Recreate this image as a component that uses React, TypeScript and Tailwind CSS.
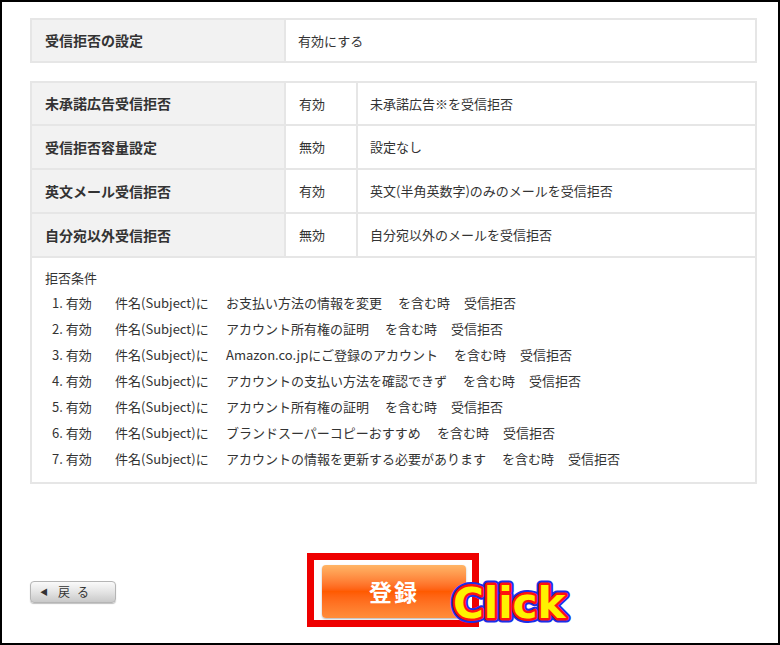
const jp = { fontFamily: '"Noto Sans CJK JP", "Liberation Sans", sans-serif' };

const settings = [
  { label: "未承諾広告受信拒否", state: "有効", note: "未承諾広告※を受信拒否" },
  { label: "受信拒否容量設定", state: "無効", note: "設定なし" },
  { label: "英文メール受信拒否", state: "有効", note: "英文(半角英数字)のみのメールを受信拒否" },
  { label: "自分宛以外受信拒否", state: "無効", note: "自分宛以外のメールを受信拒否" },
];

const rules = [
  "お支払い方法の情報を変更",
  "アカウント所有権の証明",
  "Amazon.co.jpにご登録のアカウント",
  "アカウントの支払い方法を確認できず",
  "アカウント所有権の証明",
  "ブランドスーパーコピーおすすめ",
  "アカウントの情報を更新する必要があります",
];

function ClickBadge() {
  const common = {
    x: 5,
    y: 37,
    fontSize: 42,
    fontWeight: 900,
    fontFamily: '"DejaVu Sans", "Liberation Sans", sans-serif',
  };
  return (
    <svg width="150" height="48" viewBox="0 0 150 48" className="block overflow-visible">
      <text {...common} fill="#1a2ee8" stroke="#1a2ee8" strokeWidth="9" strokeLinejoin="round">
        Click
      </text>
      <text {...common} fill="#ff1010" stroke="#ff1010" strokeWidth="5" strokeLinejoin="round">
        Click
      </text>
      <text {...common} fill="#fff200">
        Click
      </text>
    </svg>
  );
}

export default function App() {
  return (
    <div
      className="w-[780px] h-[645px] border-2 border-black bg-white text-[#333] overflow-hidden"
      style={jp}
    >
      <div className="px-[28px] pt-[16px]">
        <table className="w-[727px] border-collapse">
          <tbody>
            <tr className="h-[43px]">
              <td className="w-[254px] border-2 border-[#e6e6e6] bg-[#f2f2f2] pl-[13px] text-[14px] font-bold">
                受信拒否の設定
              </td>
              <td className="border-2 border-[#e6e6e6] pl-[12px] text-[13px]">有効にする</td>
            </tr>
          </tbody>
        </table>

        <table className="w-[727px] border-collapse mt-[18px]">
          <tbody>
            {settings.map((s, i) => (
              <tr key={s.label} className={i === 0 ? "h-[43px]" : "h-[44px]"}>
                <td className="w-[254px] border-2 border-[#e6e6e6] bg-[#f2f2f2] pl-[13px] text-[14px] font-bold">
                  {s.label}
                </td>
                <td className="w-[72px] border-2 border-[#e6e6e6] pl-[13px] text-[13px]">{s.state}</td>
                <td className="border-2 border-[#e6e6e6] pl-[12px] text-[13px]">{s.note}</td>
              </tr>
            ))}
            <tr>
              <td colSpan={3} className="border-2 border-[#e6e6e6] pl-[13px] pt-[9px] pb-[10px] text-[13px]">
                <div className="leading-[22px]">拒否条件</div>
                <ul className="mt-[1px] pl-[7px]">
                  {rules.map((r, i) => (
                    <li key={i} className="flex h-[26px] items-center whitespace-nowrap">
                      <span className="w-[63px]">{i + 1}. 有効</span>
                      <span className="w-[111px]">件名(Subject)に</span>
                      <span>{r}</span>
                      <span className="ml-[16px]">を含む時</span>
                      <span className="ml-[14px]">受信拒否</span>
                    </li>
                  ))}
                </ul>
              </td>
            </tr>
          </tbody>
        </table>

        <div className="flex items-center mt-[69px]">
          <button className="mt-[4px] flex h-[22px] w-[86px] items-center rounded-[4px] border border-[#b5b5b5] bg-gradient-to-b from-[#fafafa] via-[#e4e4e4] to-[#c9c9c9] pl-[9px] text-[12px] text-[#333] shadow-[0_1px_1px_rgba(0,0,0,0.25)]">
            <span className="text-[8px]">◀</span>
            <span className="ml-[10px] tracking-[7px]">戻る</span>
          </button>

          <div className="relative ml-[191px] h-[74px] w-[172px] border-[7px] border-[#ee0000] bg-white p-[5px] pl-[8px]">
            <div className="flex h-[53px] w-[144px] items-center justify-center rounded-[4px] bg-gradient-to-b from-[#ffb566] via-[#ff5a00] to-[#ff8d3a] text-[23px] font-bold tracking-[2px] text-white shadow-[0_1px_2px_rgba(0,0,0,0.3)]">
              登録
            </div>
            <div className="absolute left-[134px] top-[21px] w-[150px] h-[48px]">
              <ClickBadge />
            </div>
          </div>
        </div>
      </div>
    </div>
  );
}
